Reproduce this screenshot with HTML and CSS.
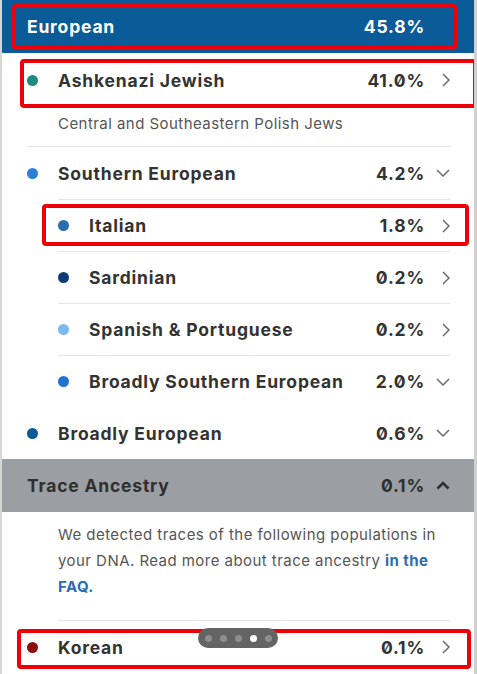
FILE: index.html
```html
<!DOCTYPE html>
<html lang="en">

<head>
    <meta charset="UTF-8">
    <title>Ancestry Composition</title>
    <link rel="stylesheet" href="styles.css">
</head>

<body>
    <div class="panel">
        <div class="region-head">
            <span class="name">European</span>
            <span class="pct">45.8%</span>
            <span class="chev"></span>
        </div>

        <div class="item top divided">
            <div class="row">
                <span class="dot" style="background:#1b8a7f"></span>
                <span class="name">Ashkenazi Jewish</span>
                <span class="pct">41.0%</span>
                <span class="chev"><svg width="8" height="14" viewBox="0 0 8 14"><path d="M1 1l6 6-6 6" fill="none" stroke="#6b6b6b" stroke-width="1.5"/></svg></span>
            </div>
            <p class="sub">Central and Southeastern Polish Jews</p>
        </div>

        <div class="item top">
            <div class="row">
                <span class="dot" style="background:#2b80d6"></span>
                <span class="name">Southern European</span>
                <span class="pct">4.2%</span>
                <span class="chev"><svg width="14" height="8" viewBox="0 0 14 8"><path d="M1 1l6 6 6-6" fill="none" stroke="#6b6b6b" stroke-width="1.5"/></svg></span>
            </div>
            <div class="nested">
                <div class="row">
                    <span class="dot" style="background:#2a6db3"></span>
                    <span class="name">Italian</span>
                    <span class="pct">1.8%</span>
                    <span class="chev"><svg width="8" height="14" viewBox="0 0 8 14"><path d="M1 1l6 6-6 6" fill="none" stroke="#6b6b6b" stroke-width="1.5"/></svg></span>
                </div>
                <div class="row">
                    <span class="dot" style="background:#0f3a78"></span>
                    <span class="name">Sardinian</span>
                    <span class="pct">0.2%</span>
                    <span class="chev"><svg width="8" height="14" viewBox="0 0 8 14"><path d="M1 1l6 6-6 6" fill="none" stroke="#6b6b6b" stroke-width="1.5"/></svg></span>
                </div>
                <div class="row">
                    <span class="dot" style="background:#7bb9f0"></span>
                    <span class="name">Spanish &amp; Portuguese</span>
                    <span class="pct">0.2%</span>
                    <span class="chev"><svg width="8" height="14" viewBox="0 0 8 14"><path d="M1 1l6 6-6 6" fill="none" stroke="#6b6b6b" stroke-width="1.5"/></svg></span>
                </div>
                <div class="row">
                    <span class="dot" style="background:#1f73d4"></span>
                    <span class="name">Broadly Southern European</span>
                    <span class="pct">2.0%</span>
                    <span class="chev"><svg width="14" height="8" viewBox="0 0 14 8"><path d="M1 1l6 6 6-6" fill="none" stroke="#6b6b6b" stroke-width="1.5"/></svg></span>
                </div>
            </div>
        </div>

        <div class="item top">
            <div class="row">
                <span class="dot" style="background:#0e5a96"></span>
                <span class="name">Broadly European</span>
                <span class="pct">0.6%</span>
                <span class="chev"><svg width="14" height="8" viewBox="0 0 14 8"><path d="M1 1l6 6 6-6" fill="none" stroke="#6b6b6b" stroke-width="1.5"/></svg></span>
            </div>
        </div>

        <div class="trace-head">
            <span class="name">Trace Ancestry</span>
            <span class="pct">0.1%</span>
            <span class="chev"><svg width="14" height="9" viewBox="0 0 14 9"><path d="M1.5 7.5l5.5-5.5 5.5 5.5" fill="none" stroke="#2f2f2f" stroke-width="2.6"/></svg></span>
        </div>

        <p class="trace-note">We detected traces of the following populations in your DNA. Read more about trace ancestry <a href="#">in the FAQ.</a></p>

        <div class="item top">
            <div class="row">
                <span class="dot" style="background:#8a1010"></span>
                <span class="name">Korean</span>
                <span class="pct">0.1%</span>
                <span class="chev"><svg width="8" height="14" viewBox="0 0 8 14"><path d="M1 1l6 6-6 6" fill="none" stroke="#6b6b6b" stroke-width="1.5"/></svg></span>
            </div>
        </div>

        <!-- review marks -->
        <div class="mark" style="left:10px;top:4px;width:445px;height:46px"></div>
        <div class="mark" style="left:18px;top:59px;width:457px;height:49px"></div>
        <div class="mark" style="left:40px;top:204px;width:427px;height:42px"></div>
        <div class="mark" style="left:15px;top:629px;width:454px;height:40px"></div>

        <div class="pager">
            <span></span><span></span><span></span><span class="on"></span><span></span>
        </div>
    </div>
</body>

</html>
```

FILE: styles.css
```css
body {
    margin: 0;
    font-family: Inter, 'Open Sans', sans-serif;
    font-feature-settings: "zero" 1;
    background: #ffffff;
    color: #333333;
}

.panel {
    position: relative;
    width: 472px;
    height: 674px;
    overflow: hidden;
    border-left: 2px solid #d6d6d6;
    border-right: 3px solid #d0d0d0;
    background: #ffffff;
}

.region-head,
.trace-head,
.row {
    display: flex;
    align-items: center;
    font-size: 17.5px;
    font-weight: 700;
    letter-spacing: 0.8px;
}

.name {
    flex: 1;
    white-space: nowrap;
}

.pct {
    text-align: right;
}

.chev {
    width: 25px;
    display: flex;
    justify-content: flex-end;
}

.region-head {
    height: 53px;
    padding: 0 24px 0 25px;
    background: #0b5b98;
    color: #ffffff;
}

.item.top {
    margin: 0 24px 0 25px;
}

.item.divided {
    border-bottom: 1px solid #e6e6e6;
}

.row {
    height: 52px;
    color: #333333;
}

.item.divided .row {
    height: 54px;
}

.dot {
    width: 11px;
    height: 11px;
    border-radius: 50%;
    margin-right: 20px;
    flex-shrink: 0;
}

.sub {
    margin: 0;
    padding: 7px 0 12px 31px;
    font-size: 15px;
    line-height: 20px;
    letter-spacing: 0.45px;
    color: #555555;
}

.nested {
    margin-left: 31px;
}

.nested .row {
    height: 51px;
    border-top: 1px solid #e6e6e6;
}

.trace-head {
    height: 53px;
    padding: 0 24px 0 25px;
    background: #9b9fa3;
    color: #2f2f2f;
}

.trace-note {
    margin: 0 24px 0 56px;
    padding: 10px 0 20px;
    font-size: 15px;
    line-height: 26px;
    letter-spacing: 0.45px;
    color: #555555;
    border-bottom: 1px solid #e6e6e6;
}

.trace-note a {
    color: #2b6cb4;
    font-weight: 700;
    text-decoration: none;
}

.mark {
    position: absolute;
    border: 4px solid #ee0008;
    border-radius: 4px;
    box-sizing: border-box;
}

.pager {
    position: absolute;
    left: 196px;
    top: 628px;
    width: 80px;
    height: 20px;
    border-radius: 10px;
    background: #646464;
    display: flex;
    align-items: center;
    justify-content: center;
    gap: 8px;
}

.pager span {
    width: 7px;
    height: 7px;
    border-radius: 50%;
    background: #8e8e8e;
}

.pager span.on {
    background: #ffffff;
}
```
